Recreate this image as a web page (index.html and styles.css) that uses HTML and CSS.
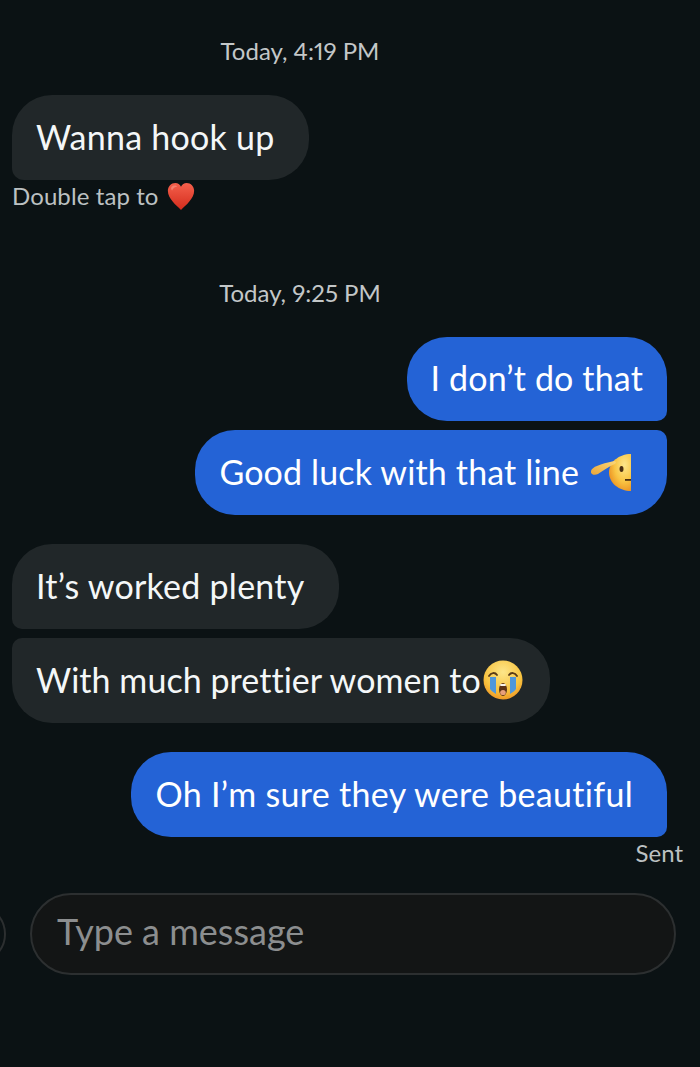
FILE: index.html
```html
<!DOCTYPE html>
<html lang="en">

<head>
    <meta charset="UTF-8">
    <meta name="viewport" content="width=device-width, initial-scale=1.0">
    <title>Messages</title>
    <link rel="stylesheet" href="styles.css">
</head>

<body>
    <div class="chat">
        <p class="time time-first">Today, 4:19 PM</p>

        <div class="bubble in single wide">Wanna hook up</div>
        <p class="hint">Double tap to
            <svg class="heart" viewBox="0 0 32 32">
                <defs>
                    <linearGradient id="heartFill" x1="0" y1="0" x2="0" y2="1">
                        <stop offset="0" stop-color="#f4604c" />
                        <stop offset="1" stop-color="#d42c1c" />
                    </linearGradient>
                </defs>
                <path fill="url(#heartFill)" d="M16 31C11 26 2 19 2 10.500C2 5.500 5.500 2 10 2C12.600 2 15 3.400 16 6C17 3.400 19.400 2 22 2C26.500 2 30 5.500 30 10.500C30 19 21 26 16 31Z" />
                <path fill="#fa9a8a" opacity="0.6" d="M6 6C8 4 11 4.500 12 6C9.500 6 7.500 7.500 6.500 10C5.500 9 5 7.500 6 6Z" />
            </svg>
        </p>

        <p class="time time-second">Today, 9:25 PM</p>

        <div class="bubble out top tight">I don’t do that</div>
        <div class="bubble out bottom next wide tight">Good luck with that line
            <svg class="emoji salute" viewBox="0 0 42 40">
                <defs>
                    <radialGradient id="faceFill" cx="0.7" cy="0.3" r="0.8">
                        <stop offset="0" stop-color="#fde68a" />
                        <stop offset="0.55" stop-color="#f9c544" />
                        <stop offset="1" stop-color="#ea8c1e" />
                    </radialGradient>
                    <linearGradient id="armFill" x1="0" y1="1" x2="1" y2="0">
                        <stop offset="0" stop-color="#e9a63a" />
                        <stop offset="1" stop-color="#fbd778" />
                    </linearGradient>
                </defs>
                <path fill="url(#faceFill)" d="M40 2V39C28 39 18 31 18 20.500C18 10 28 2 40 2Z" />
                <path fill="url(#armFill)" d="M0 19C1 15 9 12 23 9C25 9 25.500 11 24 12C19 14 13 18 7 22C3 24 -1 22 0 19Z" />
                <ellipse cx="30.500" cy="17" rx="2" ry="3" fill="#4a2f12" />
                <rect x="34" y="27" width="6" height="1.800" fill="#4a2f12" />
            </svg>
        </div>

        <div class="bubble in top-in group wide">It’s worked plenty</div>
        <div class="bubble in bottom-in next with-cry">With much prettier women to<svg class="emoji crying" viewBox="0 0 40 40">
                <defs>
                    <radialGradient id="cryFill" cx="0.5" cy="0.3" r="0.75">
                        <stop offset="0" stop-color="#fde68a" />
                        <stop offset="0.65" stop-color="#f8c33f" />
                        <stop offset="1" stop-color="#ec8f20" />
                    </radialGradient>
                </defs>
                <circle cx="20" cy="20" r="19.500" fill="url(#cryFill)" />
                <path fill="#4f97dc" d="M7 17H13V34C10.500 32.500 8.500 31 7 29Z" />
                <path fill="#4f97dc" d="M27 17H33V29C31.500 31 29.500 32.500 27 34Z" />
                <path fill="none" stroke="#5a3a16" stroke-width="1.800" stroke-linecap="round" d="M6 16C8 12.500 12 12 14 15M26 15C28 12 32 12.500 34 16" />
                <ellipse cx="20" cy="29.500" rx="4" ry="6.500" fill="#5a3216" />
                <ellipse cx="20" cy="32.500" rx="2.800" ry="2.600" fill="#e9a07a" />
                <rect x="17" y="24" width="6" height="2" rx="1" fill="#f8f4ea" />
            </svg></div>

        <div class="bubble out single-out group wide loose">Oh I’m sure they were beautiful</div>
        <p class="sent">Sent</p>

        <div class="composer">
            <div class="side-btn"></div>
            <div class="input">Type a message</div>
        </div>
    </div>
</body>

</html>
```

FILE: styles.css
```css
body {
    margin: 0;
    background: #0b1214;
    font-family: Lato, "Open Sans", sans-serif;
    font-variant-ligatures: none;
    color: white;
}

.chat {
    display: flex;
    flex-direction: column;
    height: 1067px;
    overflow: hidden;
    box-sizing: border-box;
}

.time {
    margin: 0;
    padding-right: 100px;
    text-align: center;
    font-size: 24px;
    line-height: 30px;
    font-variant-numeric: proportional-nums;
    color: #c3c7c8;
}

.time-first {
    margin-top: 36px;
    margin-bottom: 29px;
}

.time-second {
    margin-top: 68px;
    margin-bottom: 29px;
}

.bubble {
    display: flex;
    align-items: center;
    box-sizing: border-box;
    height: 85px;
    padding: 0 24px 2px;
    font-size: 34px;
    letter-spacing: 0.25px;
    white-space: nowrap;
}

.wide {
    padding-right: 34px;
}

.tight {
    letter-spacing: 0.15px;
}

.loose {
    letter-spacing: 0.3px;
}

.with-cry {
    padding-right: 27px;
    letter-spacing: 0.05px;
}

.in {
    align-self: flex-start;
    margin-left: 12px;
    background: #212729;
    color: #f4f7f8;
}

.out {
    align-self: flex-end;
    margin-right: 33px;
    background: #2463d6;
}

.single {
    border-radius: 40px 40px 40px 12px;
}

.top {
    height: 84px;
    padding-bottom: 4px;
    border-radius: 40px 40px 10px 40px;
}

.bottom {
    border-radius: 40px 10px 40px 40px;
}

.top-in {
    border-radius: 40px 40px 40px 10px;
}

.bottom-in {
    border-radius: 10px 40px 40px 40px;
}

.single-out {
    border-radius: 40px 40px 10px 40px;
}

.next {
    margin-top: 9px;
}

.group {
    margin-top: 29px;
}

.hint {
    display: flex;
    align-items: center;
    gap: 8px;
    margin: 0 0 0 12px;
    height: 30px;
    font-size: 24px;
    letter-spacing: 0.1px;
    color: #bcc1c2;
}

.heart {
    width: 30px;
    height: 30px;
    margin: 2px 0 0 -1px;
}

.sent {
    align-self: flex-end;
    margin: 1px 17px 0 0;
    font-size: 24px;
    line-height: 30px;
    color: #bcc1c2;
}

.emoji {
    flex: none;
}

.salute {
    width: 42px;
    height: 40px;
    margin-left: 12px;
}

.crying {
    width: 40px;
    height: 40px;
    margin-left: 2px;
}

.composer {
    display: flex;
    align-items: center;
    gap: 24px;
    margin-top: 25px;
}

.side-btn {
    flex: none;
    width: 60px;
    height: 60px;
    margin-left: -54px;
    border: 2px solid #2c2f30;
    border-radius: 50%;
    box-sizing: border-box;
}

.input {
    flex: none;
    box-sizing: border-box;
    width: 646px;
    height: 82px;
    line-height: 73px;
    padding-left: 25px;
    border: 2px solid #2c2f30;
    border-radius: 41px;
    background: #131515;
    font-size: 36px;
    color: #8c8e8f;
}
```
